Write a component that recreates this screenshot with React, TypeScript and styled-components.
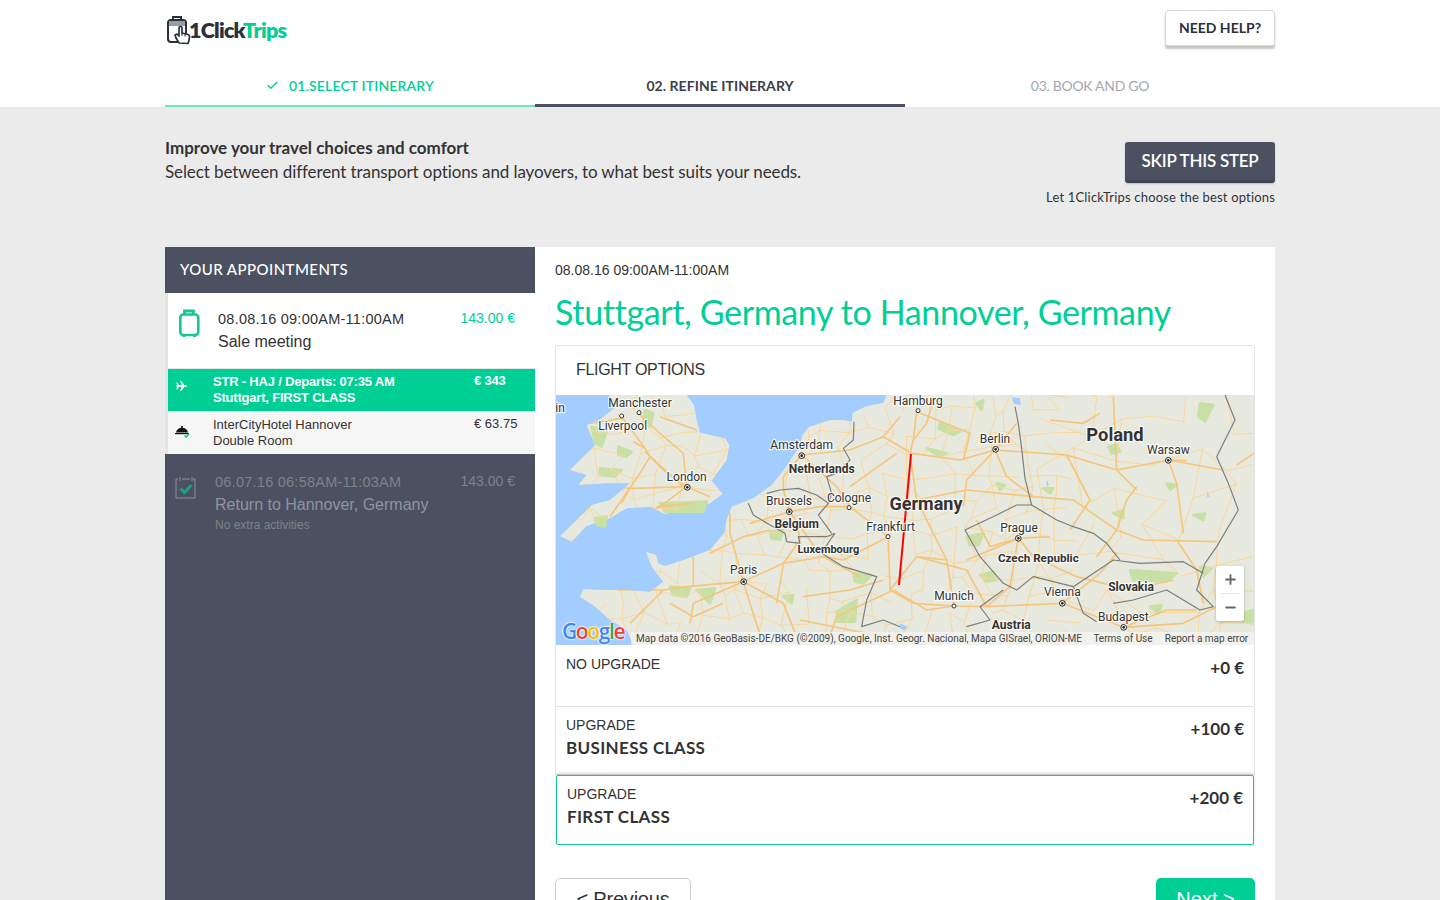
import React from "react";
import styled, { createGlobalStyle } from "styled-components";
import { Check, Plus, Minus } from "lucide-react";

const GREEN = "#00cf95";
const SLATE = "#4b5160";
const HEAD = `Lato, "Open Sans", sans-serif`;
const BODY = `"Liberation Sans", Arial, sans-serif`;

const Global = createGlobalStyle`
  html, body { margin: 0; padding: 0; background: #ebebeb; overflow: hidden; }
  * { box-sizing: border-box; }
  #root { height: 900px; overflow: hidden; }
`;

const Page = styled.div`
  height: 900px;
  overflow: hidden;
  font-family: ${HEAD};
  color: #333;
`;
const Top = styled.header`
  background: #fff;
  height: 107px;
`;
const Wrap = styled.div`
  width: 1110px;
  margin: 0 auto;
`;
const TopRow = styled.div`
  height: 65px;
  padding-top: 10px;
  display: flex;
  justify-content: space-between;
  align-items: flex-start;
`;
const Logo = styled.div`
  display: flex;
  align-items: center;
  margin: 4px 0 0 2px;
  height: 32px;
  font: 800 21.5px/32px ${HEAD};
  letter-spacing: -0.75px;
  color: #2c303a;
  svg { margin-right: -3px; }
  em { font-style: normal; color: ${GREEN}; }
`;
const HelpButton = styled.button`
  width: 110px;
  height: 36px;
  border: 1px solid #d9d9d9;
  border-radius: 3px;
  background: #fff;
  box-shadow: 0 3px 2px #c4c4c4;
  font: 700 14px ${HEAD};
  color: #2c303a;
  padding: 0 0 2px;
`;
const Tabs = styled.nav`
  display: grid;
  grid-template-columns: repeat(3, 370px);
  height: 42px;
`;
const Tab = styled.div<{ $state: "done" | "active" | "todo" }>`
  display: flex;
  align-items: center;
  justify-content: center;
  gap: 10px;
  padding-top: 1px;
  font: ${(p) => (p.$state === "todo" ? 400 : p.$state === "done" ? 600 : 700)} 14px ${HEAD};
  letter-spacing: ${(p) => (p.$state === "todo" ? "-0.3px" : p.$state === "done" ? "0.15px" : "0.05px")};
  color: ${(p) => (p.$state === "done" ? GREEN : p.$state === "active" ? "#3a3f4b" : "#a4a7ae")};
  border-bottom: ${(p) =>
    p.$state === "done" ? "2px solid #6fe6c1" : p.$state === "active" ? `3px solid ${SLATE}` : "3px solid transparent"};
`;
const Intro = styled.section`
  height: 140px;
  display: flex;
  justify-content: space-between;
  padding-top: 29px;
`;
const IntroTitle = styled.div`
  font: 700 17px/24px ${HEAD};
  color: #333;
`;
const IntroText = styled.div`
  font: 400 17px/24px ${HEAD};
  letter-spacing: -0.1px;
  color: #333;
`;
const SkipCol = styled.div`
  display: flex;
  flex-direction: column;
  align-items: flex-end;
  padding-top: 6px;
`;
const SkipButton = styled.button`
  width: 150px;
  height: 41px;
  border: 0;
  border-bottom: 3px solid #3f4451;
  border-radius: 3px;
  background: ${SLATE};
  color: #fff;
  font: 600 17px ${HEAD};
  letter-spacing: -0.25px;
  padding: 0 0 2px;
  box-shadow: 0 1px 2px rgba(0, 0, 0, 0.2);
`;
const SkipNote = styled.div`
  margin-top: 5px;
  font: 400 13px/18px ${HEAD};
  letter-spacing: 0.18px;
  color: #333;
`;
const Columns = styled.div`
  display: grid;
  grid-template-columns: 370px 740px;
  height: 653px;
`;
const Side = styled.aside`
  background: ${SLATE};
`;
const SideHead = styled.div`
  height: 46px;
  padding: 0 0 2px 15px;
  display: flex;
  align-items: center;
  font: 500 15px ${HEAD};
  letter-spacing: 0.43px;
  color: #fff;
`;
const ApptCard = styled.div`
  height: 75px;
  background: #fff;
  border-left: 3px solid #e3e3e3;
  display: grid;
  grid-template-columns: 50px 1fr auto;
  padding: 16px 20px 0 0;
`;
const IconCell = styled.div`
  padding-left: 11px;
`;
const ApptDate = styled.div<{ $muted?: boolean }>`
  font: 400 14.5px/20px ${BODY};
  letter-spacing: 0.25px;
  color: ${(p) => (p.$muted ? "#7d828d" : "#333")};
`;
const ApptName = styled.div<{ $muted?: boolean }>`
  margin-top: 2px;
  font: 400 16px/22px ${BODY};
  color: ${(p) => (p.$muted ? "#90949e" : "#333")};
`;
const ApptPrice = styled.div<{ $muted?: boolean }>`
  font: 400 14px/18px ${BODY};
  color: ${(p) => (p.$muted ? "#7d828d" : GREEN)};
`;
const SubRow = styled.div<{ $on?: boolean }>`
  height: 43px;
  border-left: 3px solid #e3e3e3;
  padding-left: 7px;
  display: grid;
  grid-template-columns: 38px 261px 1fr;
  align-items: center;
  background: ${(p) => (p.$on ? GREEN : "#f6f6f6")};
  border-top: 1px solid #e5e5e5;
  color: ${(p) => (p.$on ? "#fff" : "#333")};
  font: ${(p) => (p.$on ? 700 : 400)} 13px/16px ${BODY};
  letter-spacing: ${(p) => (p.$on ? "-0.2px" : "0")};
`;
const SubIcon = styled.div<{ $lift: number }>`
  display: flex;
  margin-top: -${(p) => p.$lift}px;
`;
const SubPrice = styled.div`
  align-self: start;
  padding-top: 4px;
`;
const Muted = styled.div`
  display: grid;
  grid-template-columns: 50px 1fr auto;
  padding: 17px 20px 0 0;
  margin-top: 1px;
`;
const MutedIcon = styled.div`
  padding-left: 10px;
  padding-top: 4px;
`;
const NoExtra = styled.div`
  margin-top: 1px;
  font: 400 12px/16px ${BODY};
  color: #7d828d;
`;
const MutedText = styled.div`
  margin-left: 0;
`;
const Main = styled.main`
  background: #fff;
  padding: 13px 20px 0;
`;
const MainDate = styled.div`
  font: 400 14px/20px ${BODY};
  color: #333;
`;
const Title = styled.h1`
  margin: 10px 0 11px;
  font: 400 34px/44px ${HEAD};
  color: ${GREEN};
  letter-spacing: -0.36px;
`;
const Card = styled.div`
  width: 700px;
  border: 1px solid #e4e4e4;
  border-radius: 3px 3px 0 0;
  border-bottom: 0;
`;
const CardHead = styled.div`
  height: 49px;
  padding: 0 0 1px 20px;
  display: flex;
  align-items: center;
  font: 400 16px ${BODY};
  letter-spacing: -0.3px;
  color: #333;
`;
const MapBox = styled.div`
  position: relative;
  height: 250px;
  background: #a3ccff;
  overflow: hidden;
  svg { display: block; }
`;
const MapLabel = styled.text<{ $bold?: boolean; $size?: number }>`
  font-family: Roboto, sans-serif;
  font-weight: ${(p) => (p.$bold ? 700 : 400)};
  font-size: ${(p) => p.$size ?? 36}px;
  fill: #333;
  stroke: #fff;
  stroke-width: 7px;
  stroke-opacity: 0.75;
  paint-order: stroke;
  text-anchor: middle;
`;
const GoogleMark = styled.div`
  position: absolute;
  left: 6px;
  bottom: 2px;
  font: 600 21px/24px "Open Sans", sans-serif;
  letter-spacing: -1.4px;
  text-shadow: 0 0 2px #fff, 0 0 2px #fff, 0 0 2px #fff;
`;
const Letter = styled.span<{ $c: string }>`
  color: ${(p) => p.$c};
`;
const Attribution = styled.div`
  position: absolute;
  left: 75px;
  right: 0;
  bottom: 0;
  height: 13px;
  display: flex;
  font: 400 10px/14px Roboto, sans-serif;
  color: #444;
`;
const AttrCell = styled.div<{ $w: number }>`
  width: ${(p) => p.$w}px;
  text-align: center;
  white-space: nowrap;
  background: rgba(245, 245, 245, 0.7);
`;
const Zoom = styled.div`
  position: absolute;
  left: 660px;
  top: 171px;
  width: 28px;
  height: 55px;
  background: #fff;
  border-radius: 2px;
  box-shadow: 0 1px 3px rgba(0, 0, 0, 0.25);
  display: flex;
  flex-direction: column;
  align-items: center;
  color: #666;
`;
const ZoomCell = styled.div`
  width: 18px;
  height: 27px;
  display: flex;
  align-items: center;
  justify-content: center;
  & + & { border-top: 1px solid #e6e6e6; }
`;
const Option = styled.div<{ $h: number; $on?: boolean; $first?: boolean }>`
  width: ${(p) => (p.$on ? 698 : 700)}px;
  margin-left: ${(p) => (p.$on ? 1 : 0)}px;
  height: ${(p) => p.$h}px;
  display: flex;
  justify-content: space-between;
  padding: ${(p) => (p.$first ? 10 : 9)}px 10px 0;
  border: 1px solid ${(p) => (p.$on ? "#14c794" : "#e4e4e4")};
  border-top-width: ${(p) => (p.$on ? "1px" : "0")};
  border-radius: ${(p) => (p.$on ? "2px" : "0")};
  box-shadow: ${(p) => (p.$on ? "0 -2px 3px rgba(0,0,0,0.15)" : "none")};
`;
const OptLabel = styled.div`
  font: 400 14px/18px ${BODY};
  color: #333;
`;
const OptName = styled.div`
  margin-top: 3px;
  font: 700 17px/22px ${HEAD};
  letter-spacing: 0.35px;
  color: #333;
`;
const OptPrice = styled.div`
  margin-top: 3px;
  font: 700 17px/20px ${HEAD};
  color: #333;
`;
const Actions = styled.div`
  width: 700px;
  margin-top: 33px;
  display: flex;
  justify-content: space-between;
`;
const PrevBtn = styled.button`
  width: 136px;
  height: 46px;
  border: 1px solid #cfcfcf;
  border-radius: 5px;
  background: #fff;
  font: 400 20px ${BODY};
  letter-spacing: -0.2px;
  color: #333;
  padding: 0 0 3px;
`;
const NextBtn = styled.button`
  width: 99px;
  height: 46px;
  border: 0;
  border-radius: 5px;
  background: ${GREEN};
  font: 400 20px ${BODY};
  color: #fff;
  padding: 0 0 3px;
`;

const Suitcase = () => (
  <svg width="21" height="29" viewBox="0 0 21 29" fill="none" stroke="#14c794" strokeWidth="2.600">
    <path d="M5.500 6V2h9v4" strokeWidth="2.800" />
    <rect x="1.300" y="5.500" width="18" height="20.500" rx="3" />
    <path d="M5 26v2M15.500 26v2" />
  </svg>
);
const LogoMark = () => (
  <svg width="25" height="30" viewBox="0 0 25 30" fill="none">
    <rect x="1" y="5" width="18" height="22" rx="3" stroke="#2c303a" strokeWidth="2" />
    <rect x="2" y="6" width="16" height="5" fill="#9a9ca3" />
    <path d="M6 5V2h8v3" stroke="#2c303a" strokeWidth="2" />
    <path d="M12 28l-3-5-1-3 2-1 2 2v-8a1.300 1.300 0 0 1 3 0v5l6 1.500c1 .3 1.500 1 1.500 2l-.5 4-1 3z" fill="#fff" stroke="#2c303a" strokeWidth="1.700" strokeLinejoin="round" />
    <path d="M15 18v3M18 19v2.500" stroke="#2c303a" strokeWidth="1" />
  </svg>
);
const PlaneMark = () => (
  <svg width="12" height="12" viewBox="0 0 14 14" fill="#fff">
    <path d="M.5 7l2-.8L1.500 3l1 0 2.300 3H8L5.800 1.300h1.500L11 6h2c1 0 1 2 0 2h-2l-3.700 4.700H5.800L8 8H4.800l-2.300 3h-1l1-3.200z" />
  </svg>
);
const BellMark = () => (
  <svg width="16" height="14" viewBox="0 0 16 14">
    <path d="M1 8.500c.5-3 3-4.700 6-4.700s5.500 1.700 6 4.700z" fill="#111" />
    <rect x="6.200" y="2" width="1.600" height="2" fill="#111" />
    <rect x="0" y="9" width="14" height="1.200" fill="#111" />
    <path d="M9.500 11.500l1.500 1.500 3-3" stroke={GREEN} strokeWidth="1.600" fill="none" />
  </svg>
);
const CalendarMark = () => (
  <svg width="22" height="24" viewBox="0 0 22 24" fill="none">
    <path d="M3 3h-2v19h19V3h-2M7 3h8M5 1v4M17 1v4" stroke="#8d919b" strokeWidth="1" />
    <path d="M5.500 12.500l4 4 7-7.500" stroke="#1f9f80" strokeWidth="3" />
  </svg>
);

const LAND = "M1010 15 L1000 38 L945 50 L908 68 L905 95 L880 90 L840 90 L775 112 L758 135 L745 175 L705 235 L665 285 L610 325 L545 350 L528 395 L525 425 L480 480 L432 498 L400 510 L345 528 L325 520 L318 495 L288 485 L305 530 L340 575 L300 605 L220 600 L160 600 L100 598 L90 620 L135 650 L180 690 L230 720 L250 765 L2112 765 L2112 15 Z";
const GB = "M175 15 L205 45 L170 72 L150 90 L110 105 L135 165 L100 200 L60 240 L110 255 L85 285 L170 280 L240 280 L180 330 L125 345 L70 400 L30 438 L65 455 L110 408 L180 385 L230 355 L300 350 L345 372 L400 360 L480 340 L518 312 L485 272 L530 210 L538 165 L525 145 L450 128 L440 90 L432 45 L410 15 Z";
const GREENS = [
  "M125 110 L170 125 L155 170 L135 160Z", "M205 170 L245 185 L230 200 L205 195Z", "M285 60 L310 70 L300 110 L280 100Z", "M150 235 L215 240 L195 260 L150 255Z",
  "M330 340 L470 335 L460 365 L345 365Z", "M135 385 L170 380 L165 410 L140 405Z", "M360 590 L420 595 L410 620 L370 615Z", "M440 600 L495 595 L480 640Z",
  "M660 425 L700 420 L690 450 L665 445Z", "M910 550 L965 555 L940 580 L915 575Z", "M860 665 L920 630 L915 695 L860 695Z", "M700 620 L730 615 L725 640Z",
  "M1170 100 L1230 125 L1210 135 L1165 115Z", "M1280 40 L1300 30 L1295 60Z", "M1340 280 L1365 285 L1350 300Z", "M1290 555 L1330 545 L1340 570 L1310 575Z",
  "M1675 170 L1700 165 L1710 185 L1685 190Z", "M1690 370 L1720 360 L1720 385Z", "M1740 540 L1880 550 L1850 575 L1750 570Z", "M1800 650 L1835 645 L1825 670Z",
  "M1950 40 L1990 45 L1965 95 L1945 80Z", "M1250 440 L1300 430 L1285 465 L1260 465Z", "M2070 670 L2112 660 L2112 700 L2080 695Z", "M1480 295 L1510 295 L1500 310Z",
  "M1930 375 L1965 370 L1960 390Z", "M1850 280 L1880 285 L1860 300Z", "M1130 175 L1190 190 L1170 200Z", "M1950 530 L1985 535 L1960 560Z",
];
const ROADS = [
  "215,80 285,175 300,200 270,250 180,380", "285,185 400,290", "265,70 330,130 400,190 410,290", "410,290 250,295 160,290 100,285", "410,290 480,320", "410,290 330,350 310,360", "320,350 430,340",
  "330,80 440,120", "215,85 120,100", "285,175 250,155", "300,200 340,240 410,290", "240,295 215,340", "580,575 700,520 750,450 740,400", "580,575 540,430 540,370", "580,575 410,590 340,600 200,600",
  "580,575 430,640 420,700", "580,575 600,640 640,765", "580,575 700,640 750,765", "700,520 820,500 930,560", "480,490 580,440 660,420", "600,400 720,365 810,350 890,350", "720,365 700,300 700,260 750,200",
  "720,365 800,480", "755,195 900,180 1000,140 1050,80", "755,195 860,290 900,350", "900,290 1040,190", "900,350 1015,440 1020,600", "1015,440 880,510 820,500", "1030,600 860,680 830,765", "520,640 430,680 360,640",
  "760,620 900,600 1000,570", "750,690 900,720 1000,740", "430,500 430,590", "340,600 240,700", "700,520 680,640", "1100,65 1090,150 1080,190", "1085,190 1230,210 1335,180 1550,195 1700,240 1855,210 1910,212",
  "1335,180 1400,100", "1335,180 1250,270 1240,350", "1335,180 1370,260 1450,320 1570,330 1700,420 1780,450 2000,455", "1405,445 1250,510", "1405,445 1500,440", "1405,445 1450,500 1580,560", "1405,445 1320,470 1280,390",
  "1537,640 1650,550 1700,490", "1537,640 1720,712 1850,660 1940,660", "1212,648 1310,650 1537,640", "1212,648 1190,510 1100,500", "1100,500 1020,600", "1100,65 1260,130 1240,210", "1000,140 1085,190", "1080,190 1100,330 1190,510",
  "1100,330 1250,300 1450,320", "1100,500 1250,540 1310,650", "1212,648 1090,640 1020,600", "1700,240 1760,300", "1700,240 1690,20", "1550,195 1620,330 1560,420", "1855,210 1880,280 1900,430", "1855,210 2020,240", "2112,190 2060,225",
  "1700,420 1730,330 1760,290", "1700,420 1640,500", "1580,560 1740,600 1870,570", "1720,712 1900,700 2000,650", "1310,650 1380,590 1405,445", "1150,30 1130,100 1090,150", "1030,600 1130,660 1212,648", "1880,450 1940,540 1960,640", "1500,90 1600,100 1650,70",
];
const BORDERS = [
  "912,95 910,150 880,175 900,210 860,250 830,260 845,310 835,340 805,375 845,430", "650,310 690,300 745,295 800,315 835,340", "595,340 610,375 660,405 705,430 710,455 750,460 745,440 830,440 855,430",
  "855,430 840,450 815,490 880,530 930,545 980,560 950,630 935,710 1000,690 1050,710", "1395,50 1405,100 1415,175 1425,265 1445,345", "1445,345 1400,345 1340,375 1245,420 1290,500 1360,580 1400,600 1450,560 1570,590 1690,510 1770,520 1900,515 1960,550",
  "1445,345 1520,390 1570,410 1630,430 1670,460 1710,510", "1690,640 1750,630 1850,600 1950,660 1990,650", "2025,15 2055,90 2000,200 2035,280 2065,360 2000,470 1965,520 1940,600 1990,650", "1290,650 1360,600", "1290,650 1320,690 1250,710", "1570,590 1600,670 1640,695",
];
type Lbl = [string, number, number, boolean?, number?];
const LABELS: Lbl[] = [
  ["in", 30, 65], ["Manchester", 270, 50], ["Liverpool", 218, 119], ["London", 410, 272], ["Amsterdam", 755, 176], ["Netherlands", 815, 248, true], ["Brussels", 717, 344], ["Cologne", 897, 335],
  ["Belgium", 740, 414, true], ["Luxembourg", 835, 490, true, 33], ["Frankfurt", 1022, 423], ["Paris", 581, 553], ["Germany", 1128, 361, true, 54], ["Hamburg", 1104, 45], ["Berlin", 1335, 158],
  ["Poland", 1695, 152, true, 55], ["Warsaw", 1855, 192], ["Prague", 1407, 425], ["Czech Republic", 1465, 517, true, 35], ["Munich", 1212, 630], ["Vienna", 1537, 619], ["Slovakia", 1743, 602, true, 36],
  ["Budapest", 1720, 693], ["Austria", 1384, 716, true, 36],
];
const PLAIN = [[215, 78], [267, 68], [897, 353], [1014, 440], [1104, 62], [1212, 648]];
const BULL = [[412, 292], [755, 197], [718, 365], [581, 575], [1337, 178], [1855, 211], [1405, 445], [1537, 640], [1721, 712]];
const LAKES = ["M1385 22 L1410 25 L1412 45 L1392 42Z", "M1050 700 L1075 712 L1065 722 L1050 715Z", "M1490 268 L1496 285 L1490 290Z", "M1970 300 L1978 320 L1972 322Z"];

function hash(a: number, b: number) {
  const s = Math.sin(a * 12.9898 + b * 78.233) * 43758.5453;
  return s - Math.floor(s);
}
function buildNet(step: number, x0: number, x1: number, chance: number) {
  const out: string[] = [];
  const pt = (i: number, j: number): [number, number] => [
    x0 + i * step + (hash(i, j) - 0.5) * step * 0.8,
    j * step + (hash(j + 50, i + 9) - 0.5) * step * 0.8,
  ];
  const cols = Math.ceil((x1 - x0) / step);
  for (let i = 0; i <= cols; i++) {
    for (let j = 0; j <= Math.ceil(780 / step); j++) {
      const [x, y] = pt(i, j);
      if (hash(i + 3, j + 7) < chance) {
        const [a, b] = pt(i + 1, j);
        out.push(`${x},${y} ${a},${b}`);
      }
      if (hash(i + 11, j + 23) < chance) {
        const [a, b] = pt(i, j + 1);
        out.push(`${x},${y} ${a},${b}`);
      }
    }
  }
  return out;
}
const NET_WEST = buildNet(62, 18, 1500, 0.72);
const NET_EAST = buildNet(105, 1500, 2112, 0.6);

const EuropeMap = () => (
  <svg width="698" height="250" viewBox="18 15 2094 750">
    <defs>
      <clipPath id="landclip">
        <path d={LAND} />
        <path d={GB} />
      </clipPath>
    </defs>
    <path d={LAND} fill="#e8e9de" />
    <path d={GB} fill="#e8e9de" />
    {GREENS.map((d, i) => <path key={i} d={d} fill="#c8e0a6" stroke="#c8e0a6" strokeWidth="8" strokeLinejoin="round" />)}
    {LAKES.map((d, i) => <path key={i} d={d} fill="#a3ccff" />)}
    <g clipPath="url(#landclip)">
      {NET_WEST.concat(NET_EAST).map((r, i) => <polyline key={i} points={r} fill="none" stroke="#f8d79b" strokeWidth="3" strokeLinecap="round" />)}
      {ROADS.map((r, i) => <polyline key={i} points={r} fill="none" stroke="#f5c67c" strokeWidth="5" strokeLinejoin="round" />)}
    </g>
    {BORDERS.map((b, i) => <polyline key={i} points={b} fill="none" stroke="#7b7d7d" strokeWidth="3.500" strokeLinejoin="round" />)}
    <line x1="1083" y1="192" x2="1047" y2="585" stroke="#f00" strokeWidth="6" />
    {PLAIN.map(([x, y], i) => <circle key={i} cx={x} cy={y} r="6" fill="#fff" stroke="#333" strokeWidth="3" />)}
    {BULL.map(([x, y], i) => (
      <g key={i}>
        <circle cx={x} cy={y} r="8.500" fill="#fff" stroke="#222" strokeWidth="3" />
        <circle cx={x} cy={y} r="4" fill="#222" />
      </g>
    ))}
    {LABELS.map(([t, x, y, b, s]) => <MapLabel key={t} x={x} y={y} $bold={b} $size={s}>{t}</MapLabel>)}
  </svg>
);

export default function App() {
  return (
    <Page>
      <Global />
      <Top>
        <Wrap>
          <TopRow>
            <Logo>
              <LogoMark />
              <span>1Click<em>Trips</em></span>
            </Logo>
            <HelpButton>NEED HELP?</HelpButton>
          </TopRow>
          <Tabs>
            <Tab $state="done"><Check size={13} strokeWidth={2.5} />01.SELECT ITINERARY</Tab>
            <Tab $state="active">02. REFINE ITINERARY</Tab>
            <Tab $state="todo">03. BOOK AND GO</Tab>
          </Tabs>
        </Wrap>
      </Top>
      <Wrap>
        <Intro>
          <div>
            <IntroTitle>Improve your travel choices and comfort</IntroTitle>
            <IntroText>Select between different transport options and layovers, to what best suits your needs.</IntroText>
          </div>
          <SkipCol>
            <SkipButton>SKIP THIS STEP</SkipButton>
            <SkipNote>Let 1ClickTrips choose the best options</SkipNote>
          </SkipCol>
        </Intro>
        <Columns>
          <Side>
            <SideHead>YOUR APPOINTMENTS</SideHead>
            <ApptCard>
              <IconCell><Suitcase /></IconCell>
              <div>
                <ApptDate>08.08.16 09:00AM-11:00AM</ApptDate>
                <ApptName>Sale meeting</ApptName>
              </div>
              <ApptPrice>143.00 €</ApptPrice>
            </ApptCard>
            <SubRow $on>
              <SubIcon $lift={9}><PlaneMark /></SubIcon>
              <div>STR - HAJ / Departs: 07:35 AM<br />Stuttgart, FIRST CLASS</div>
              <SubPrice>€ 343</SubPrice>
            </SubRow>
            <SubRow>
              <SubIcon $lift={5}><BellMark /></SubIcon>
              <div>InterCityHotel Hannover<br />Double Room</div>
              <SubPrice>€ 63.75</SubPrice>
            </SubRow>
            <Muted>
              <MutedIcon><CalendarMark /></MutedIcon>
              <MutedText>
                <ApptDate $muted>06.07.16 06:58AM-11:03AM</ApptDate>
                <ApptName $muted>Return to Hannover, Germany</ApptName>
                <NoExtra>No extra activities</NoExtra>
              </MutedText>
              <ApptPrice $muted>143.00 €</ApptPrice>
            </Muted>
          </Side>
          <Main>
            <MainDate>08.08.16 09:00AM-11:00AM</MainDate>
            <Title>Stuttgart, Germany to Hannover, Germany</Title>
            <Card>
              <CardHead>FLIGHT OPTIONS</CardHead>
              <MapBox>
                <EuropeMap />
                <GoogleMark>
                  <Letter $c="#4285f4">G</Letter><Letter $c="#ea4335">o</Letter><Letter $c="#fbbc05">o</Letter><Letter $c="#4285f4">g</Letter><Letter $c="#34a853">l</Letter><Letter $c="#ea4335">e</Letter>
                </GoogleMark>
                <Attribution>
                  <AttrCell $w={456}>Map data ©2016 GeoBasis-DE/BKG (©2009), Google, Inst. Geogr. Nacional, Mapa GISrael, ORION-ME</AttrCell>
                  <AttrCell $w={72}>Terms of Use</AttrCell>
                  <AttrCell $w={95}>Report a map error</AttrCell>
                </Attribution>
                <Zoom>
                  <ZoomCell><Plus size={15} strokeWidth={3} /></ZoomCell>
                  <ZoomCell><Minus size={15} strokeWidth={3} /></ZoomCell>
                </Zoom>
              </MapBox>
            </Card>
            <Option $h={62} $first>
              <OptLabel>NO UPGRADE</OptLabel>
              <OptPrice>+0 €</OptPrice>
            </Option>
            <Option $h={68}>
              <div>
                <OptLabel>UPGRADE</OptLabel>
                <OptName>BUSINESS CLASS</OptName>
              </div>
              <OptPrice>+100 €</OptPrice>
            </Option>
            <Option $h={70} $on>
              <div>
                <OptLabel>UPGRADE</OptLabel>
                <OptName>FIRST CLASS</OptName>
              </div>
              <OptPrice>+200 €</OptPrice>
            </Option>
            <Actions>
              <PrevBtn>&lt; Previous</PrevBtn>
              <NextBtn>Next &gt;</NextBtn>
            </Actions>
          </Main>
        </Columns>
      </Wrap>
    </Page>
  );
}
